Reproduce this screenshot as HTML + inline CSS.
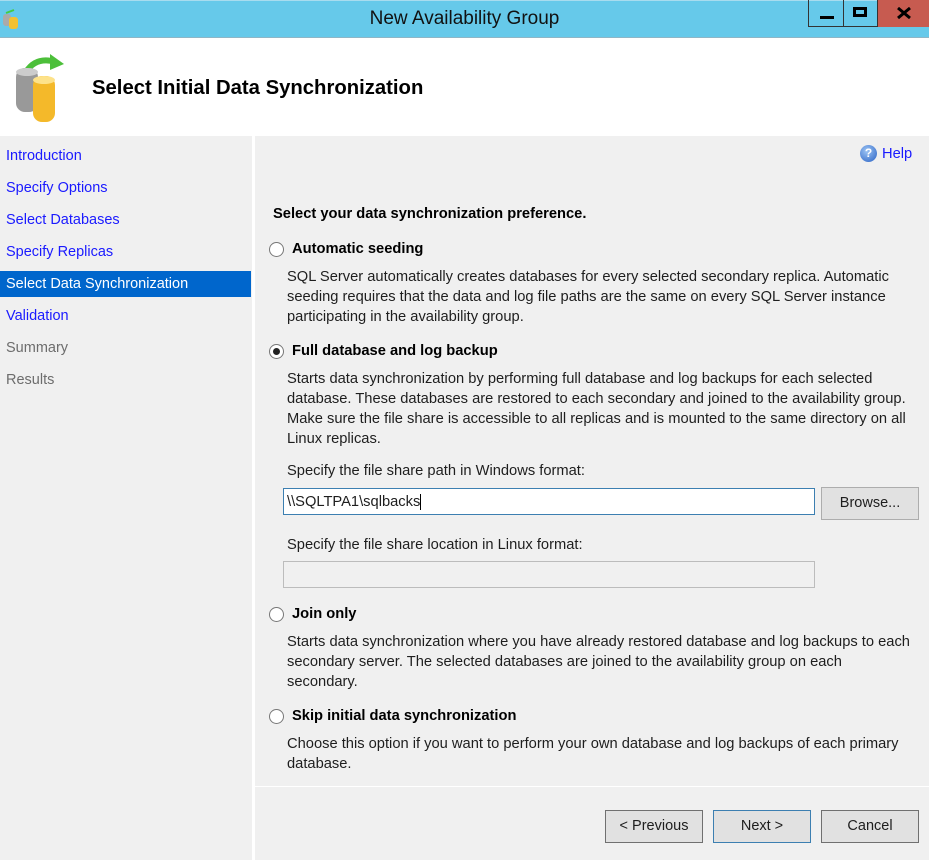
<!DOCTYPE html>
<html><head><style>
*{margin:0;padding:0;box-sizing:border-box}
body{width:929px;height:860px;overflow:hidden;background:#f0f0f0;font-family:"Liberation Sans",sans-serif;font-size:14.7px;color:#1e1e1e;position:relative}
.a{position:absolute;white-space:nowrap}
.nav{position:absolute;left:6px;color:#1a1aff;font-size:14.5px}
.b{font-weight:bold;color:#000}
.radio{position:absolute;width:15px;height:15px;border:1px solid #777;border-radius:50%;background:#fff}
.btn{position:absolute;height:33px;border:1px solid #707070;background:#e1e1e1;text-align:center;line-height:31px;font-size:14.5px}
</style></head><body>
<div class="a" style="left:0;top:0;width:929px;height:38px;background:#66c9ea;border-top:1px solid #a8dcef;border-bottom:1px solid #8fb6c6"></div>
<svg class="a" style="left:2px;top:8px" width="18" height="22"><rect x="1" y="6" width="8" height="12" rx="3" fill="#aaa"/><rect x="7" y="9" width="9" height="12" rx="3" fill="#f3c131"/><path d="M4 5 L12 2" stroke="#4c4" stroke-width="2"/></svg>
<div class="a" style="left:0;top:8px;width:929px;text-align:center;font-size:19px;color:#111">New Availability Group</div>
<div class="a" style="left:808px;top:0;width:36px;height:27px;border:1px solid #333;border-top:none"></div>
<div class="a" style="left:820px;top:16px;width:14px;height:3px;background:#000"></div>
<div class="a" style="left:844px;top:0;width:34px;height:27px;border:1px solid #333;border-top:none;border-left:none"></div>
<div class="a" style="left:853px;top:7px;width:14px;height:10px;border:3px solid #000"></div>
<div class="a" style="left:878px;top:0;width:51px;height:27px;background:#c75b50"></div>
<svg class="a" style="left:897px;top:7px" width="14" height="12"><path d="M1 1 L13 11 M13 1 L1 11" stroke="#000" stroke-width="3"/></svg>
<div class="a" style="left:0;top:38px;width:929px;height:98px;background:#fff"></div>
<svg class="a" style="left:12px;top:50px" width="58" height="78">
<path d="M14 22 Q24 6 44 12" stroke="#4cbf3a" stroke-width="6" fill="none"/><path d="M38 4 L52 14 L38 20Z" fill="#4cbf3a"/>
<rect x="4" y="18" width="22" height="44" rx="9" fill="#999"/><ellipse cx="15" cy="22" rx="11" ry="4" fill="#ccc"/>
<rect x="21" y="26" width="22" height="46" rx="9" fill="#f4b92a"/><ellipse cx="32" cy="30" rx="11" ry="4" fill="#fde28a"/></svg>
<div class="a b" style="left:92px;top:77px;font-size:20.3px">Select Initial Data Synchronization</div>
<div class="a" style="left:252px;top:136px;width:3px;height:724px;background:#fff"></div>
<div class="nav" style="top:148px">Introduction</div>
<div class="nav" style="top:180px">Specify Options</div>
<div class="nav" style="top:212px">Select Databases</div>
<div class="nav" style="top:244px">Specify Replicas</div>
<div class="a" style="left:0;top:271px;width:251px;height:26px;background:#0066cc"></div>
<div class="nav" style="top:276px;color:#fff">Select Data Synchronization</div>
<div class="nav" style="top:308px">Validation</div>
<div class="nav" style="top:340px;color:#6d6d6d">Summary</div>
<div class="nav" style="top:372px;color:#6d6d6d">Results</div>
<div class="a" style="left:860px;top:145px;width:17px;height:17px;border-radius:50%;background:radial-gradient(circle at 40% 35%,#9cc4f4,#2a62c4);color:#fff;font-size:12px;font-weight:bold;text-align:center;line-height:17px">?</div>
<div class="a" style="left:882px;top:146px;color:#1a1aff">Help</div>
<div class="a b" style="left:273px;top:206px">Select your data synchronization preference.</div>
<div class="radio" style="left:269px;top:242px"></div>
<div class="a b" style="left:292px;top:241px">Automatic seeding</div>
<div class="a" style="left:287px;top:267px;line-height:20px">SQL Server automatically creates databases for every selected secondary replica. Automatic<br>seeding requires that the data and log file paths are the same on every SQL Server instance<br>participating in the availability group.</div>
<div class="radio" style="left:269px;top:344px"><div style="width:7px;height:7px;border-radius:50%;background:#222;margin:3px"></div></div>
<div class="a b" style="left:292px;top:343px">Full database and log backup</div>
<div class="a" style="left:287px;top:369px;line-height:20px">Starts data synchronization by performing full database and log backups for each selected<br>database. These databases are restored to each secondary and joined to the availability group.<br>Make sure the file share is accessible to all replicas and is mounted to the same directory on all<br>Linux replicas.</div>
<div class="a" style="left:287px;top:463px">Specify the file share path in Windows format:</div>
<div class="a" style="left:283px;top:488px;width:532px;height:27px;background:#fff;border:1px solid #3c7fb1;padding:5px 3px">\\SQLTPA1\sqlbacks<span style="border-left:1px solid #000"></span></div>
<div class="btn" style="left:821px;top:487px;width:98px;background:#e1e1e1;border-color:#adadad">Browse...</div>
<div class="a" style="left:287px;top:537px">Specify the file share location in Linux format:</div>
<div class="a" style="left:283px;top:561px;width:532px;height:27px;border:1px solid #bcbcbc;background:#f0f0f0"></div>
<div class="radio" style="left:269px;top:607px"></div>
<div class="a b" style="left:292px;top:606px">Join only</div>
<div class="a" style="left:287px;top:632px;line-height:20px">Starts data synchronization where you have already restored database and log backups to each<br>secondary server. The selected databases are joined to the availability group on each<br>secondary.</div>
<div class="radio" style="left:269px;top:709px"></div>
<div class="a b" style="left:292px;top:708px">Skip initial data synchronization</div>
<div class="a" style="left:287px;top:734px;line-height:20px">Choose this option if you want to perform your own database and log backups of each primary<br>database.</div>
<div class="a" style="left:255px;top:786px;width:674px;height:1px;background:#fff"></div>
<div class="btn" style="left:605px;top:810px;width:98px">&lt; Previous</div>
<div class="btn" style="left:713px;top:810px;width:98px;border-color:#3c7fb1">Next &gt;</div>
<div class="btn" style="left:821px;top:810px;width:98px">Cancel</div>
</body></html>
